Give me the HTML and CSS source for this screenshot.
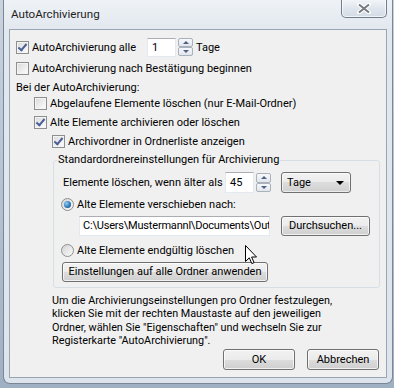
FILE: index.html
```html
<!DOCTYPE html>
<html lang="de">
<head>
    <meta charset="UTF-8">
    <title>AutoArchivierung</title>
    <link rel="stylesheet" href="styles.css">
</head>
<body>
    <div class="window">
        <div class="titlebar">
            <span class="title">AutoArchivierung</span>
            <div class="close">
                <svg width="14" height="11" viewBox="0 0 14 11">
                    <path d="M2 1.5 L12 9.5 M12 1.5 L2 9.5" stroke="#fff" stroke-width="4" stroke-linecap="round"/>
                    <path d="M2 1.5 L12 9.5 M12 1.5 L2 9.5" stroke="#767a80" stroke-width="2"/>
                </svg>
            </div>
        </div>

        <div class="client">
            <div class="row r1">
                <span class="cb on"></span>
                <span class="lbl lbl-alle">AutoArchivierung alle</span>
                <span class="edit e-days">1</span>
                <span class="spin"><i class="up"></i><i class="dn"></i></span>
                <span class="unit">Tage</span>
            </div>
            <div class="row r2">
                <span class="cb"></span>
                <span class="lbl">AutoArchivierung nach Bestätigung beginnen</span>
            </div>
            <div class="row r3">
                <span class="lbl">Bei der AutoArchivierung:</span>
            </div>
            <div class="row r4 lvl2">
                <span class="cb"></span>
                <span class="lbl">Abgelaufene Elemente löschen (nur E-Mail-Ordner)</span>
            </div>
            <div class="row r5 lvl2">
                <span class="cb on"></span>
                <span class="lbl">Alte Elemente archivieren oder löschen</span>
            </div>
            <div class="row r6 lvl3">
                <span class="cb on"></span>
                <span class="lbl">Archivordner in Ordnerliste anzeigen</span>
            </div>

            <div class="group">
                <div class="group-title">Standardordnereinstellungen für Archivierung</div>
                <div class="row g-age">
                    <span class="lbl lbl-age">Elemente löschen, wenn älter als</span>
                    <span class="edit e-age">45</span>
                    <span class="spin"><i class="up"></i><i class="dn"></i></span>
                    <span class="select">Tage<i class="caret"></i></span>
                </div>
                <div class="row g-move">
                    <span class="rb on"></span>
                    <span class="lbl">Alte Elemente verschieben nach:</span>
                </div>
                <div class="row g-path">
                    <span class="edit e-path">C:\Users\Mustermannl\Documents\Out</span>
                    <span class="btn btn-browse">Durchsuchen...</span>
                </div>
                <div class="row g-del">
                    <span class="rb"></span>
                    <span class="lbl">Alte Elemente endgültig löschen</span>
                </div>
                <div class="row g-apply">
                    <span class="btn btn-apply">Einstellungen auf alle Ordner anwenden</span>
                </div>
            </div>

            <p class="hint">
                <span>Um die Archivierungseinstellungen pro Ordner festzulegen,</span><br>
                <span>klicken Sie mit der rechten Maustaste auf den jeweiligen</span><br>
                <span>Ordner, wählen Sie "Eigenschaften" und wechseln Sie zur</span><br>
                <span>Registerkarte "AutoArchivierung".</span>
            </p>

            <div class="actions">
                <span class="btn btn-ok">OK</span>
                <span class="btn btn-cancel">Abbrechen</span>
            </div>
        </div>
    </div>

    <svg class="cursor" width="13" height="20" viewBox="0 0 13 20">
        <path d="M0.5 0.5 L0.5 16.5 L4.3 12.8 L6.8 18.6 L9.1 17.6 L6.6 12 L11.5 12 Z" fill="#fff" stroke="#000" stroke-width="1"/>
    </svg>
</body>
</html>
```

FILE: styles.css
```css
body {
    margin: 0;
    width: 394px;
    height: 388px;
    overflow: hidden;
    background: linear-gradient(#c9d3de, #9fb0c3);
    font-family: Roboto, "Noto Sans", sans-serif;
    font-size: 11px;
    color: #000;
    position: relative;
}

.window {
    position: relative;
    margin-left: 3px;
    width: 390px;
    height: 384px;
    box-sizing: border-box;
    border: 1px solid #7b8796;
    border-top: none;
    border-radius: 0 0 7px 7px;
    background: linear-gradient(#eef2f6 0, #e2e8ef 30px, #dde4ec 100%);
}

.titlebar {
    height: 29px;
    line-height: 29px;
    padding-left: 7px;
}

.title {
    font-size: 11.6px;
    color: #1e1e1e;
}

.close {
    position: absolute;
    top: -1px;
    right: 5px;
    width: 44px;
    height: 18px;
    border: 1px solid #6f7c8c;
    border-top: none;
    border-radius: 0 0 5px 5px;
    background: linear-gradient(#f4f6f9, #dfe5ed 55%, #d3dbe5);
    box-shadow: inset 0 0 0 1px rgba(255, 255, 255, 0.7);
    display: flex;
    align-items: center;
    justify-content: center;
}

.client {
    margin-left: 5px;
    width: 378px;
    height: 349px;
    box-sizing: border-box;
    border: 1px solid #9aa5b2;
    background: #f0f0f0;
    padding-left: 6px;
    overflow: hidden;
}

.row {
    display: flex;
    align-items: center;
    height: 16px;
    white-space: nowrap;
}

.r1 { margin-top: 8px; height: 18px; }
.r2 { margin-top: 4px; }
.r3 { margin-top: 3px; }
.r4 { margin-top: 0; }
.r5, .r6 { margin-top: 3px; }
.lvl2 { padding-left: 18px; }
.lvl3 { padding-left: 36px; }

.cb {
    width: 11px;
    height: 11px;
    border: 1px solid #8e8f8f;
    background: linear-gradient(135deg, #d9d9d9, #f7f7f7 80%);
    box-shadow: inset 0 0 0 1px #f4f4f4;
    margin-right: 3px;
    flex: none;
    position: relative;
}

.cb.on::after {
    content: "";
    position: absolute;
    left: 3px;
    top: 0;
    width: 3px;
    height: 7px;
    border: solid #4a5f97;
    border-width: 0 2px 2px 0;
    transform: rotate(40deg);
}

.rb {
    width: 11px;
    height: 11px;
    border: 1px solid #8e8f8f;
    border-radius: 50%;
    background: linear-gradient(135deg, #d4d4d4, #fafafa);
    margin-right: 3px;
    flex: none;
    position: relative;
}

.rb.on::after {
    content: "";
    position: absolute;
    left: 2px;
    top: 2px;
    width: 7px;
    height: 7px;
    border-radius: 50%;
    background: radial-gradient(circle at 35% 35%, #8fd0f8, #2a71b0 60%, #1a4f82);
}

.lbl-alle { width: 115px; }

.edit {
    box-sizing: border-box;
    height: 19px;
    line-height: 17px;
    padding-left: 4px;
    background: #fff;
    border: 1px solid #e3e9ef;
    border-top-color: #abadb3;
    overflow: hidden;
}

.e-days { width: 29px; }

.spin {
    display: flex;
    flex-direction: column;
    margin-left: 2px;
    width: 15px;
    height: 18px;
}

.spin i {
    flex: 1;
    border: 1px solid #a8b1bc;
    border-radius: 2px;
    background: linear-gradient(#f7f8fa, #e2e6ec);
    position: relative;
}

.spin i::after {
    content: "";
    position: absolute;
    left: 4px;
    top: 2px;
    border-left: 3px solid transparent;
    border-right: 3px solid transparent;
}

.spin .up::after { border-bottom: 3px solid #4d6185; }
.spin .dn::after { border-top: 3px solid #4d6185; }

.unit { margin-left: 3px; }

.group {
    margin-top: 11px;
    margin-left: 37px;
    width: 327px;
    box-sizing: border-box;
    border: 1px solid #d5dfe5;
    border-radius: 3px;
    padding: 0 0 5px 7px;
}

.group-title {
    display: block;
    width: max-content;
    margin: -9px 0 0 -4px;
    height: 16px;
    line-height: 16px;
    padding: 0 1px;
    background: #f0f0f0;
}

.g-age { margin-top: 4px; height: 21px; padding-left: 2px; }
.lbl-age { width: 162px; }
.e-age { width: 29px; height: 21px; line-height: 19px; }
.g-age .spin { height: 19px; }

.select {
    box-sizing: border-box;
    margin-left: 10px;
    width: 70px;
    height: 21px;
    line-height: 19px;
    padding-left: 5px;
    border: 1px solid #707070;
    border-radius: 3px;
    background: linear-gradient(#f2f2f2 0, #ebebeb 50%, #dddddd 50%, #cfcfcf 100%);
    box-shadow: inset 0 0 0 1px rgba(255, 255, 255, 0.6);
    position: relative;
}

.caret {
    position: absolute;
    right: 6px;
    top: 8px;
    border-left: 4px solid transparent;
    border-right: 4px solid transparent;
    border-top: 4px solid #000;
}

.g-move { margin-top: 3px; }

.g-path { margin-top: 3px; height: 21px; }

.e-path {
    margin-left: 18px;
    width: 191px;
    height: 20px;
    line-height: 18px;
    padding-left: 3px;
    letter-spacing: -0.2px;
}

.btn {
    box-sizing: border-box;
    display: inline-block;
    height: 20px;
    line-height: 18px;
    text-align: center;
    border: 1px solid #707070;
    border-radius: 3px;
    background: linear-gradient(#f2f2f2 0, #ebebeb 50%, #dddddd 50%, #cfcfcf 100%);
    box-shadow: inset 0 0 0 1px rgba(255, 255, 255, 0.7);
}

.btn-browse { margin-left: 11px; width: 89px; }

.g-del { margin-top: 6px; }

.g-apply { margin-top: 4px; height: 20px; }
.btn-apply { margin-left: 1px; width: 206px; }

.hint {
    margin: 6px 0 0 36px;
    font-size: 10.8px;
    line-height: 13.4px;
    white-space: nowrap;
}

.actions {
    margin-top: 1px;
    display: flex;
    justify-content: flex-end;
    gap: 12px;
    padding-right: 7px;
}

.actions .btn { width: 72px; height: 21px; line-height: 19px; }

.cursor {
    position: absolute;
    left: 245px;
    top: 245px;
}
```
